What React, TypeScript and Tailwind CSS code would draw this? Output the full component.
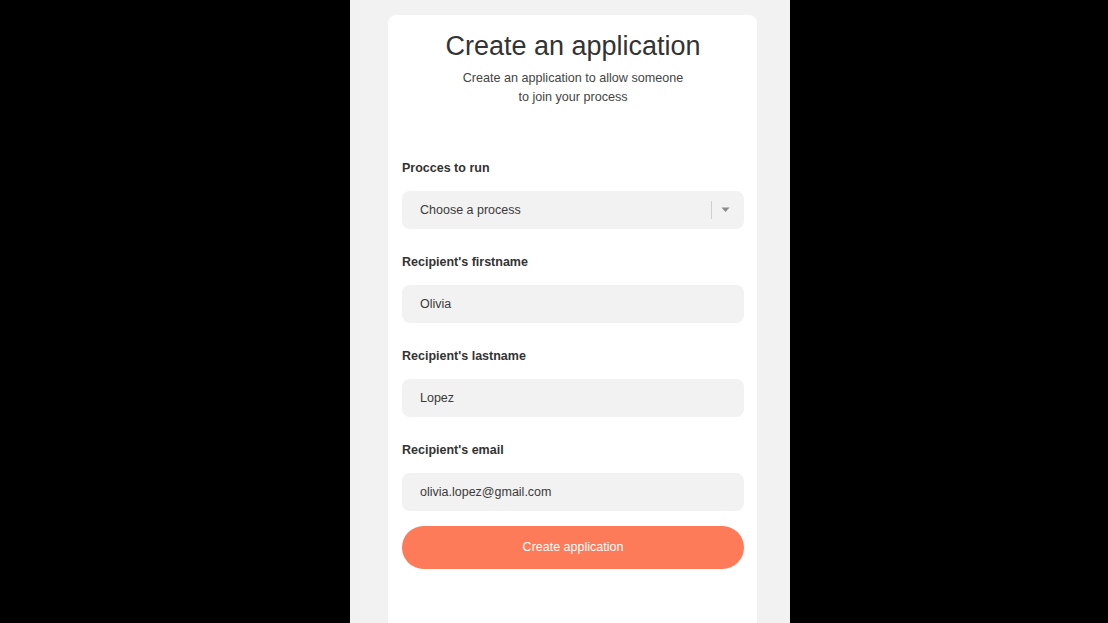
import React from "react";

// Mobile-width "create application" form on a black page.

const FIELDS = [
  { label: "Recipient's firstname", value: "Olivia" },
  { label: "Recipient's lastname", value: "Lopez" },
  { label: "Recipient's email", value: "olivia.lopez@gmail.com" },
];

const Label: React.FC<{ children: React.ReactNode }> = ({ children }) => (
  <div className="text-[12.5px] font-bold leading-4 text-[#333333]">{children}</div>
);

export default function App() {
  return (
    <div className="flex h-screen w-full overflow-hidden bg-black pl-[350px] font-['Liberation_Sans',Arial,sans-serif]">
      <div className="flex h-full w-[440px] flex-col bg-[#f2f2f2] pl-[38px] pr-[33px] pt-[15px]">
        <div className="flex-1 rounded-t-lg bg-white pl-[14px] pr-[13px] pt-4">
          <h1 className="text-center text-[27px] leading-[30px] text-[#333333]">Create an application</h1>
          <p className="mt-[8px] text-center text-[12.6px] leading-[19px] text-[#444444]">
            Create an application to allow someone
            <br />
            to join your process
          </p>

          <div className="mt-[53px]">
            <Label>Procces to run</Label>
            <div className="mt-[15px] flex h-[38px] items-center rounded-lg bg-[#f2f2f2] pl-[18px] pr-[14px]">
              <span className="flex-1 text-[12.5px] text-[#3a3a3a]">Choose a process</span>
              <span className="h-[18px] w-px bg-[#cfcfcf]" />
              <svg width="9" height="6" viewBox="0 0 9 6" className="ml-[9px]">
                <path d="M0.5 0.5 L8.5 0.5 L4.5 5 Z" fill="#8a8a8a" />
              </svg>
            </div>
          </div>

          {FIELDS.map((f) => (
            <div key={f.label} className="mt-[25px]">
              <Label>{f.label}</Label>
              <div className="mt-[15px] flex h-[38px] items-center rounded-lg bg-[#f2f2f2] px-[18px] text-[12.5px] text-[#3a3a3a]">
                {f.value}
              </div>
            </div>
          ))}

          <button className="mt-[15px] h-[43px] w-full rounded-full bg-[#fe7b59] text-[12.5px] text-white">
            Create application
          </button>
        </div>
      </div>
    </div>
  );
}
